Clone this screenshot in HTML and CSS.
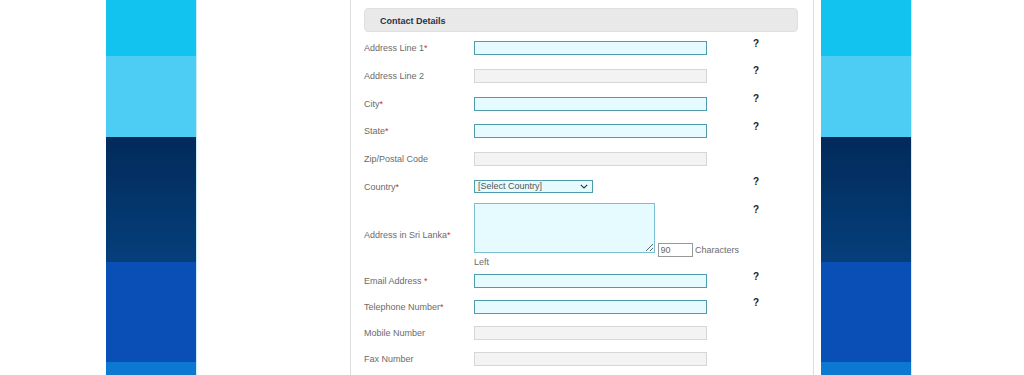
FILE: index.html
```html
<!DOCTYPE html>
<html lang="en">

<head>
    <meta charset="UTF-8">
    <meta name="viewport" content="width=device-width, initial-scale=1.0">
    <title>Contact Details</title>
    <link rel="stylesheet" href="styles.css">
</head>

<body>
    <div class="page">
        <div class="stripe stripe_left">
            <div class="band band1"></div>
            <div class="band band2"></div>
            <div class="band band3"></div>
            <div class="band band4"></div>
            <div class="band band5"></div>
        </div>

        <div class="panel">
            <div class="section_head">Contact Details</div>
            <div class="form">
                <div class="row">
                    <label class="label">Address Line 1<span class="req">*</span></label>
                    <div class="field"><input type="text" class="txt required"></div>
                    <div class="help">?</div>
                </div>
                <div class="row">
                    <label class="label">Address Line 2</label>
                    <div class="field"><input type="text" class="txt"></div>
                    <div class="help">?</div>
                </div>
                <div class="row">
                    <label class="label">City<span class="req">*</span></label>
                    <div class="field"><input type="text" class="txt required"></div>
                    <div class="help">?</div>
                </div>
                <div class="row">
                    <label class="label">State<span class="req">*</span></label>
                    <div class="field"><input type="text" class="txt required"></div>
                    <div class="help">?</div>
                </div>
                <div class="row">
                    <label class="label">Zip/Postal Code</label>
                    <div class="field"><input type="text" class="txt"></div>
                    <div class="help"></div>
                </div>
                <div class="row">
                    <label class="label">Country<span class="req">*</span></label>
                    <div class="field">
                        <div class="select_wrap">
                            <select class="sel">
                                <option>[Select Country]</option>
                            </select>
                            <svg class="chevron" width="8" height="5" viewBox="0 0 8 5">
                                <path d="M0.8 0.8 L4 4 L7.2 0.8" fill="none" stroke="#333" stroke-width="1.1"/>
                            </svg>
                        </div>
                    </div>
                    <div class="help">?</div>
                </div>
                <div class="row row_area">
                    <label class="label">Address in Sri Lanka<span class="req">*</span></label>
                    <div class="field field_area"><textarea class="area"></textarea> <input type="text" class="count" value="90" readonly> Characters Left</div>
                    <div class="help">?</div>
                </div>
                <div class="row row_small">
                    <label class="label">Email Address <span class="req">*</span></label>
                    <div class="field"><input type="text" class="txt required"></div>
                    <div class="help">?</div>
                </div>
                <div class="row row_small">
                    <label class="label">Telephone Number<span class="req">*</span></label>
                    <div class="field"><input type="text" class="txt required"></div>
                    <div class="help">?</div>
                </div>
                <div class="row row_small">
                    <label class="label">Mobile Number</label>
                    <div class="field"><input type="text" class="txt"></div>
                    <div class="help"></div>
                </div>
                <div class="row row_small">
                    <label class="label">Fax Number</label>
                    <div class="field"><input type="text" class="txt"></div>
                    <div class="help"></div>
                </div>
            </div>
        </div>

        <div class="stripe stripe_right">
            <div class="band band1"></div>
            <div class="band band2"></div>
            <div class="band band3"></div>
            <div class="band band4"></div>
            <div class="band band5"></div>
        </div>
    </div>
</body>

</html>
```

FILE: styles.css
```css
* {
    padding: 0;
    margin: 0;
    box-sizing: border-box;
}

body {
    background: #fff;
    font-family: "Liberation Sans", Arial, sans-serif;
    font-size: 9px;
    color: #6b6b6b;
    height: 375px;
    overflow: hidden;
}

.page {
    display: flex;
    height: 375px;
}

/* side stripes */
.stripe {
    width: 91px;
    height: 100%;
    display: flex;
    flex-direction: column;
    border-right: 1px solid #c8eefa;
}

.stripe_left {
    margin-left: 106px;
}

.stripe_right {
    margin-left: 7px;
}

.band1 {
    height: 56px;
    background: #12c3ef;
}

.band2 {
    height: 81px;
    background: #4ecdf4;
}

.band3 {
    height: 125px;
    background: linear-gradient(#022a5a, #053f7b);
}

.band4 {
    height: 100px;
    background: #0a4fb5;
}

.band5 {
    flex: 1;
    background: #0c78cf;
}

/* form panel */
.panel {
    margin-left: 153px;
    width: 464px;
    border-left: 1px solid #ddd;
    border-right: 1px solid #ddd;
    padding: 8px 15px 0 13px;
}

.section_head {
    height: 24px;
    line-height: 24px;
    padding-left: 15px;
    background: #e9e9e9;
    border: 1px solid #e0e0e0;
    border-radius: 4px;
    font-weight: bold;
    font-size: 9px;
    color: #2d3048;
}

.form {
    margin-top: 2.5px;
}

.row {
    display: grid;
    grid-template-columns: 110px 278px 1fr;
    align-items: center;
    height: 27.7px;
}

.row_area {
    height: 67.8px;
}

.row_small {
    height: 26px;
}

.label {
    color: #6b6b6b;
}

.req {
    color: #c0392b;
}

.txt {
    display: block;
    width: 233px;
    height: 14px;
    border: 1px solid #d6d6d6;
    background: #f3f3f3;
    outline: none;
}

.txt.required {
    border-color: #4f9aab;
    background: #e6fbff;
}

.help {
    align-self: start;
    padding: 3px 0 0 1px;
    line-height: 11px;
    font-weight: bold;
    font-size: 10px;
    color: #222;
}

.select_wrap {
    position: relative;
    width: 119px;
    height: 13px;
}

.sel {
    -webkit-appearance: none;
    appearance: none;
    display: block;
    width: 119px;
    height: 13px;
    border: 1px solid #4f9aab;
    background: #e6fbff;
    border-radius: 0;
    padding-left: 3px;
    font-family: "Liberation Sans", Arial, sans-serif;
    font-size: 9px;
    line-height: 11px;
    color: #555;
    outline: none;
}

.chevron {
    position: absolute;
    right: 5px;
    top: 4px;
}

.field_area {
    align-self: start;
    padding-top: 2px;
    color: #6b6b6b;
}

.area {
    width: 181px;
    height: 50px;
    border: 1px solid #7cc0d0;
    background: #e6fbff;
    vertical-align: baseline;
    outline: none;
}

.count {
    width: 35px;
    height: 14px;
    border: 1px solid #999;
    background: #fff;
    padding-left: 2px;
    font-family: "Liberation Sans", Arial, sans-serif;
    font-size: 9px;
    color: #666;
    outline: none;
}
```
